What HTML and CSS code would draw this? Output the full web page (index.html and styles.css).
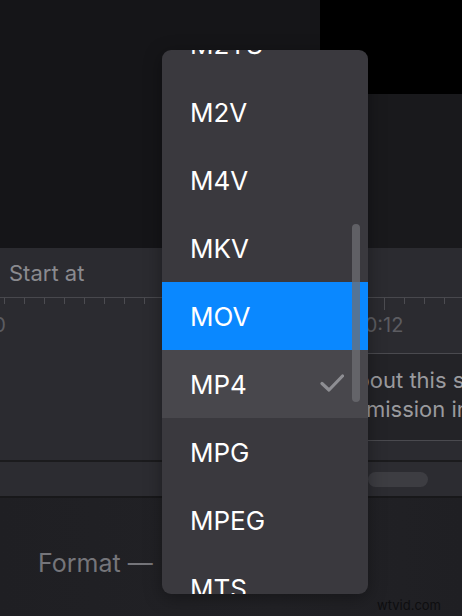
FILE: index.html
```html
<!DOCTYPE html>
<html lang="en">
<head>
<meta charset="utf-8">
<title>Format picker</title>
<link rel="stylesheet" href="styles.css">
</head>
<body>
<div class="app">
  <div class="preview">
    <div class="preview-main"></div>
    <div class="preview-side">
      <div class="video-black"></div>
      <div class="video-rest"></div>
    </div>
  </div>

  <div class="editor">
    <div class="start-row">Start at</div>
    <div class="ruler">
      <div class="ticks"></div>
      <div class="major major-left"></div>
      <div class="major major-right"></div>
      <span class="time time-left">0:00</span>
      <span class="time time-right">0:12</span>
    </div>
    <div class="middle">
      <div class="note">
        <div class="note-line l1">about this setting</div>
        <div class="note-line l2">permission in settings</div>
      </div>
    </div>
    <div class="scroll-row">
      <div class="thumb"></div>
    </div>
  </div>

  <div class="footer">
    <span class="format-label">Format —</span>
    <span class="watermark">wtvid.com</span>
  </div>

  <div class="dropdown">
    <ul class="options">
      <li class="option">M2TS</li>
      <li class="option">M2V</li>
      <li class="option">M4V</li>
      <li class="option">MKV</li>
      <li class="option highlighted">MOV</li>
      <li class="option selected">MP4
        <svg class="check" width="24" height="18" viewBox="0 0 24 18"><path d="M2 9.5 L9 16 L22.5 2" fill="none" stroke="#8e8e93" stroke-width="3.2" stroke-linecap="round" stroke-linejoin="round"/></svg>
      </li>
      <li class="option">MPG</li>
      <li class="option">MPEG</li>
      <li class="option">MTS</li>
    </ul>
    <div class="scrollbar"></div>
  </div>
</div>
</body>
</html>
```

FILE: styles.css
```css
* { box-sizing: border-box; }
html, body { margin: 0; padding: 0; }
body {
  width: 462px;
  height: 616px;
  overflow: hidden;
  background: #1e1e22;
  font-family: Inter, "Noto Sans", "Liberation Sans", sans-serif;
}
.app {
  position: relative;
  width: 462px;
  height: 616px;
  display: flex;
  flex-direction: column;
  overflow: hidden;
}
.preview {
  height: 248px;
  display: flex;
  flex-shrink: 0;
}
.preview-main { flex: 1; background: #151518; }
.preview-side { width: 142px; display: flex; flex-direction: column; }
.video-black { height: 94px; background: #000; }
.video-rest { flex: 1; background: #19191c; }

.editor {
  background: #2b2b30;
  display: flex;
  flex-direction: column;
  flex-shrink: 0;
}
.start-row {
  height: 49px;
  padding-left: 9px;
  display: flex;
  align-items: center;
  font-size: 22px;
  color: #8a8a8f;
}
.ruler {
  position: relative;
  height: 56px;
  border-top: 1px solid #48484d;
}
.ticks {
  height: 6px;
  margin-left: 4px;
  background: repeating-linear-gradient(to right, #4c4c51 0, #4c4c51 1px, transparent 1px, transparent 20px);
}
.major {
  position: absolute;
  top: 0;
  width: 1px;
  height: 12px;
  background: #4c4c51;
}
.major-left { left: -16px; }
.major-right { left: 384px; }
.time {
  position: absolute;
  top: 15px;
  font-size: 20px;
  color: #5c5c61;
  width: 60px;
  text-align: center;
}
.time-left { left: -46px; }
.time-right { left: 354px; }

.middle {
  height: 109px;
  padding-left: 300px;
  border-bottom: 2px solid #1b1b1d;
}
.note {
  height: 88px;
  background: #232327;
  border-top: 1px solid #4a4a4f;
  border-bottom: 1px solid #4a4a4f;
  padding-top: 12px;
  overflow: hidden;
}
.note-line {
  font-size: 22px;
  line-height: 29px;
  color: #9a9a9e;
  white-space: nowrap;
}
.l1 { padding-left: 44px; }
.l2 { padding-left: 31px; }

.scroll-row {
  height: 36px;
  padding: 10px 0 0 368px;
  background: #2c2c31;
  border-bottom: 2px solid #18181a;
}
.thumb {
  width: 60px;
  height: 15px;
  border-radius: 8px;
  background: #3d3d42;
}

.footer {
  flex: 1;
  position: relative;
  background: linear-gradient(to right, #1f1f23, #222226 60%, #1f1f23);
  padding: 50px 0 0 38px;
}
.format-label {
  font-size: 25px;
  color: #75757a;
}
.watermark {
  position: absolute;
  right: 21px;
  bottom: 3px;
  font-size: 13px;
  color: #0e0e10;
}

.dropdown {
  position: absolute;
  left: 162px;
  top: 50px;
  width: 206px;
  height: 544px;
  background: #3a393e;
  border-radius: 9px;
  overflow: hidden;
  box-shadow: 0 4px 18px rgba(0, 0, 0, 0.35);
}
.options {
  list-style: none;
  margin: -40px 0 0 0;
  padding: 0;
}
.option {
  height: 68px;
  display: flex;
  align-items: center;
  justify-content: space-between;
  padding: 0 24px 0 28px;
  font-size: 26px;
  color: #ffffff;
}
.option.highlighted { background: #0a88ff; }
.option.selected { background: #48474c; }
.check { display: block; margin-top: -2px; }
.scrollbar {
  position: absolute;
  left: 190px;
  top: 174px;
  width: 8px;
  height: 178px;
  border-radius: 4px;
  background: rgba(110, 110, 115, 0.75);
}
```
